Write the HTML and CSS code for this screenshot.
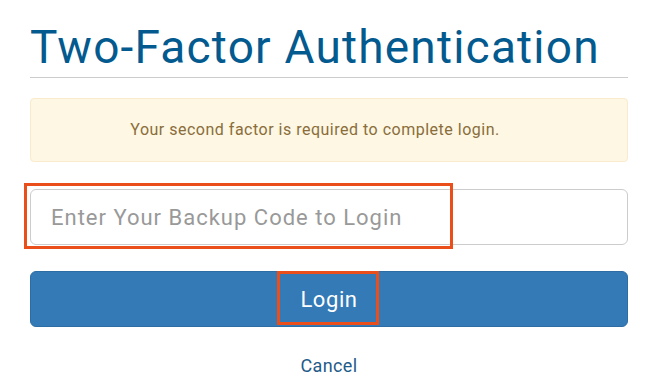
FILE: index.html
```html
<!DOCTYPE html>
<html lang="en">
<head>
  <meta charset="UTF-8" />
  <title>Two-Factor Authentication</title>
  <link rel="stylesheet" href="styles.css">
</head>
<body>

<div class="container">
  <h1 class="page-title">Two-Factor Authentication</h1>

  <div class="alert">Your second factor is required to complete login.</div>

  <form class="twofa-form" onsubmit="return false">
    <div class="field">
      <input type="text" class="code-input" placeholder="Enter Your Backup Code to Login" />
      <span class="mark mark-input"></span>
    </div>
    <button type="submit" class="login-btn">
      Login
      <span class="mark mark-btn"></span>
    </button>
  </form>

  <p class="cancel"><a href="#">Cancel</a></p>
</div>

</body>
</html>
```

FILE: styles.css
```css
body {
  font-family: Roboto, 'Liberation Sans', sans-serif;
  background: #ffffff;
  margin: 0;
  padding: 0;
}

.container {
  width: 598px;
  margin-left: 30px;
  padding-top: 22px;
}

.page-title {
  margin: 0;
  font-size: 46px;
  font-weight: 400;
  line-height: 50px;
  letter-spacing: 1.2px;
  color: #035a8f;
  padding-bottom: 5px;
  border-bottom: 1px solid #cccccc;
}

.alert {
  margin-top: 20px;
  padding: 21px 43px 21px 15px;
  background: #fdf7e3;
  border: 1px solid #faebcc;
  border-radius: 4px;
  color: #8a6d3b;
  font-size: 16px;
  letter-spacing: 0.5px;
  line-height: 20px;
  text-align: center;
}

.twofa-form {
  margin: 0;
}

.field {
  position: relative;
  margin-top: 27px;
}

.code-input {
  display: block;
  box-sizing: border-box;
  width: 100%;
  height: 56px;
  padding: 0 20px;
  border: 1px solid #cccccc;
  border-radius: 6px;
  font-family: inherit;
  font-size: 22px;
  letter-spacing: 1px;
  color: #555555;
  outline: none;
}

.code-input::placeholder {
  color: #999999;
}

.login-btn {
  position: relative;
  display: block;
  width: 100%;
  height: 56px;
  margin-top: 26px;
  background: #337ab7;
  border: 1px solid #2e6da4;
  border-radius: 6px;
  color: #ffffff;
  font-family: inherit;
  font-size: 22px;
  letter-spacing: 0.6px;
  cursor: pointer;
}

.mark {
  position: absolute;
  box-sizing: border-box;
  border: 3px solid #e94e1b;
  pointer-events: none;
}

.mark-input {
  left: -6px;
  top: -6px;
  width: 429px;
  height: 66px;
}

.mark-btn {
  left: 246px;
  top: -1px;
  width: 102px;
  height: 54px;
}

.cancel {
  margin: 27px 0 0;
  text-align: center;
  font-size: 18px;
  letter-spacing: 0.4px;
  line-height: 24px;
}

.cancel a {
  color: #1f5b8a;
  text-decoration: none;
}
```
